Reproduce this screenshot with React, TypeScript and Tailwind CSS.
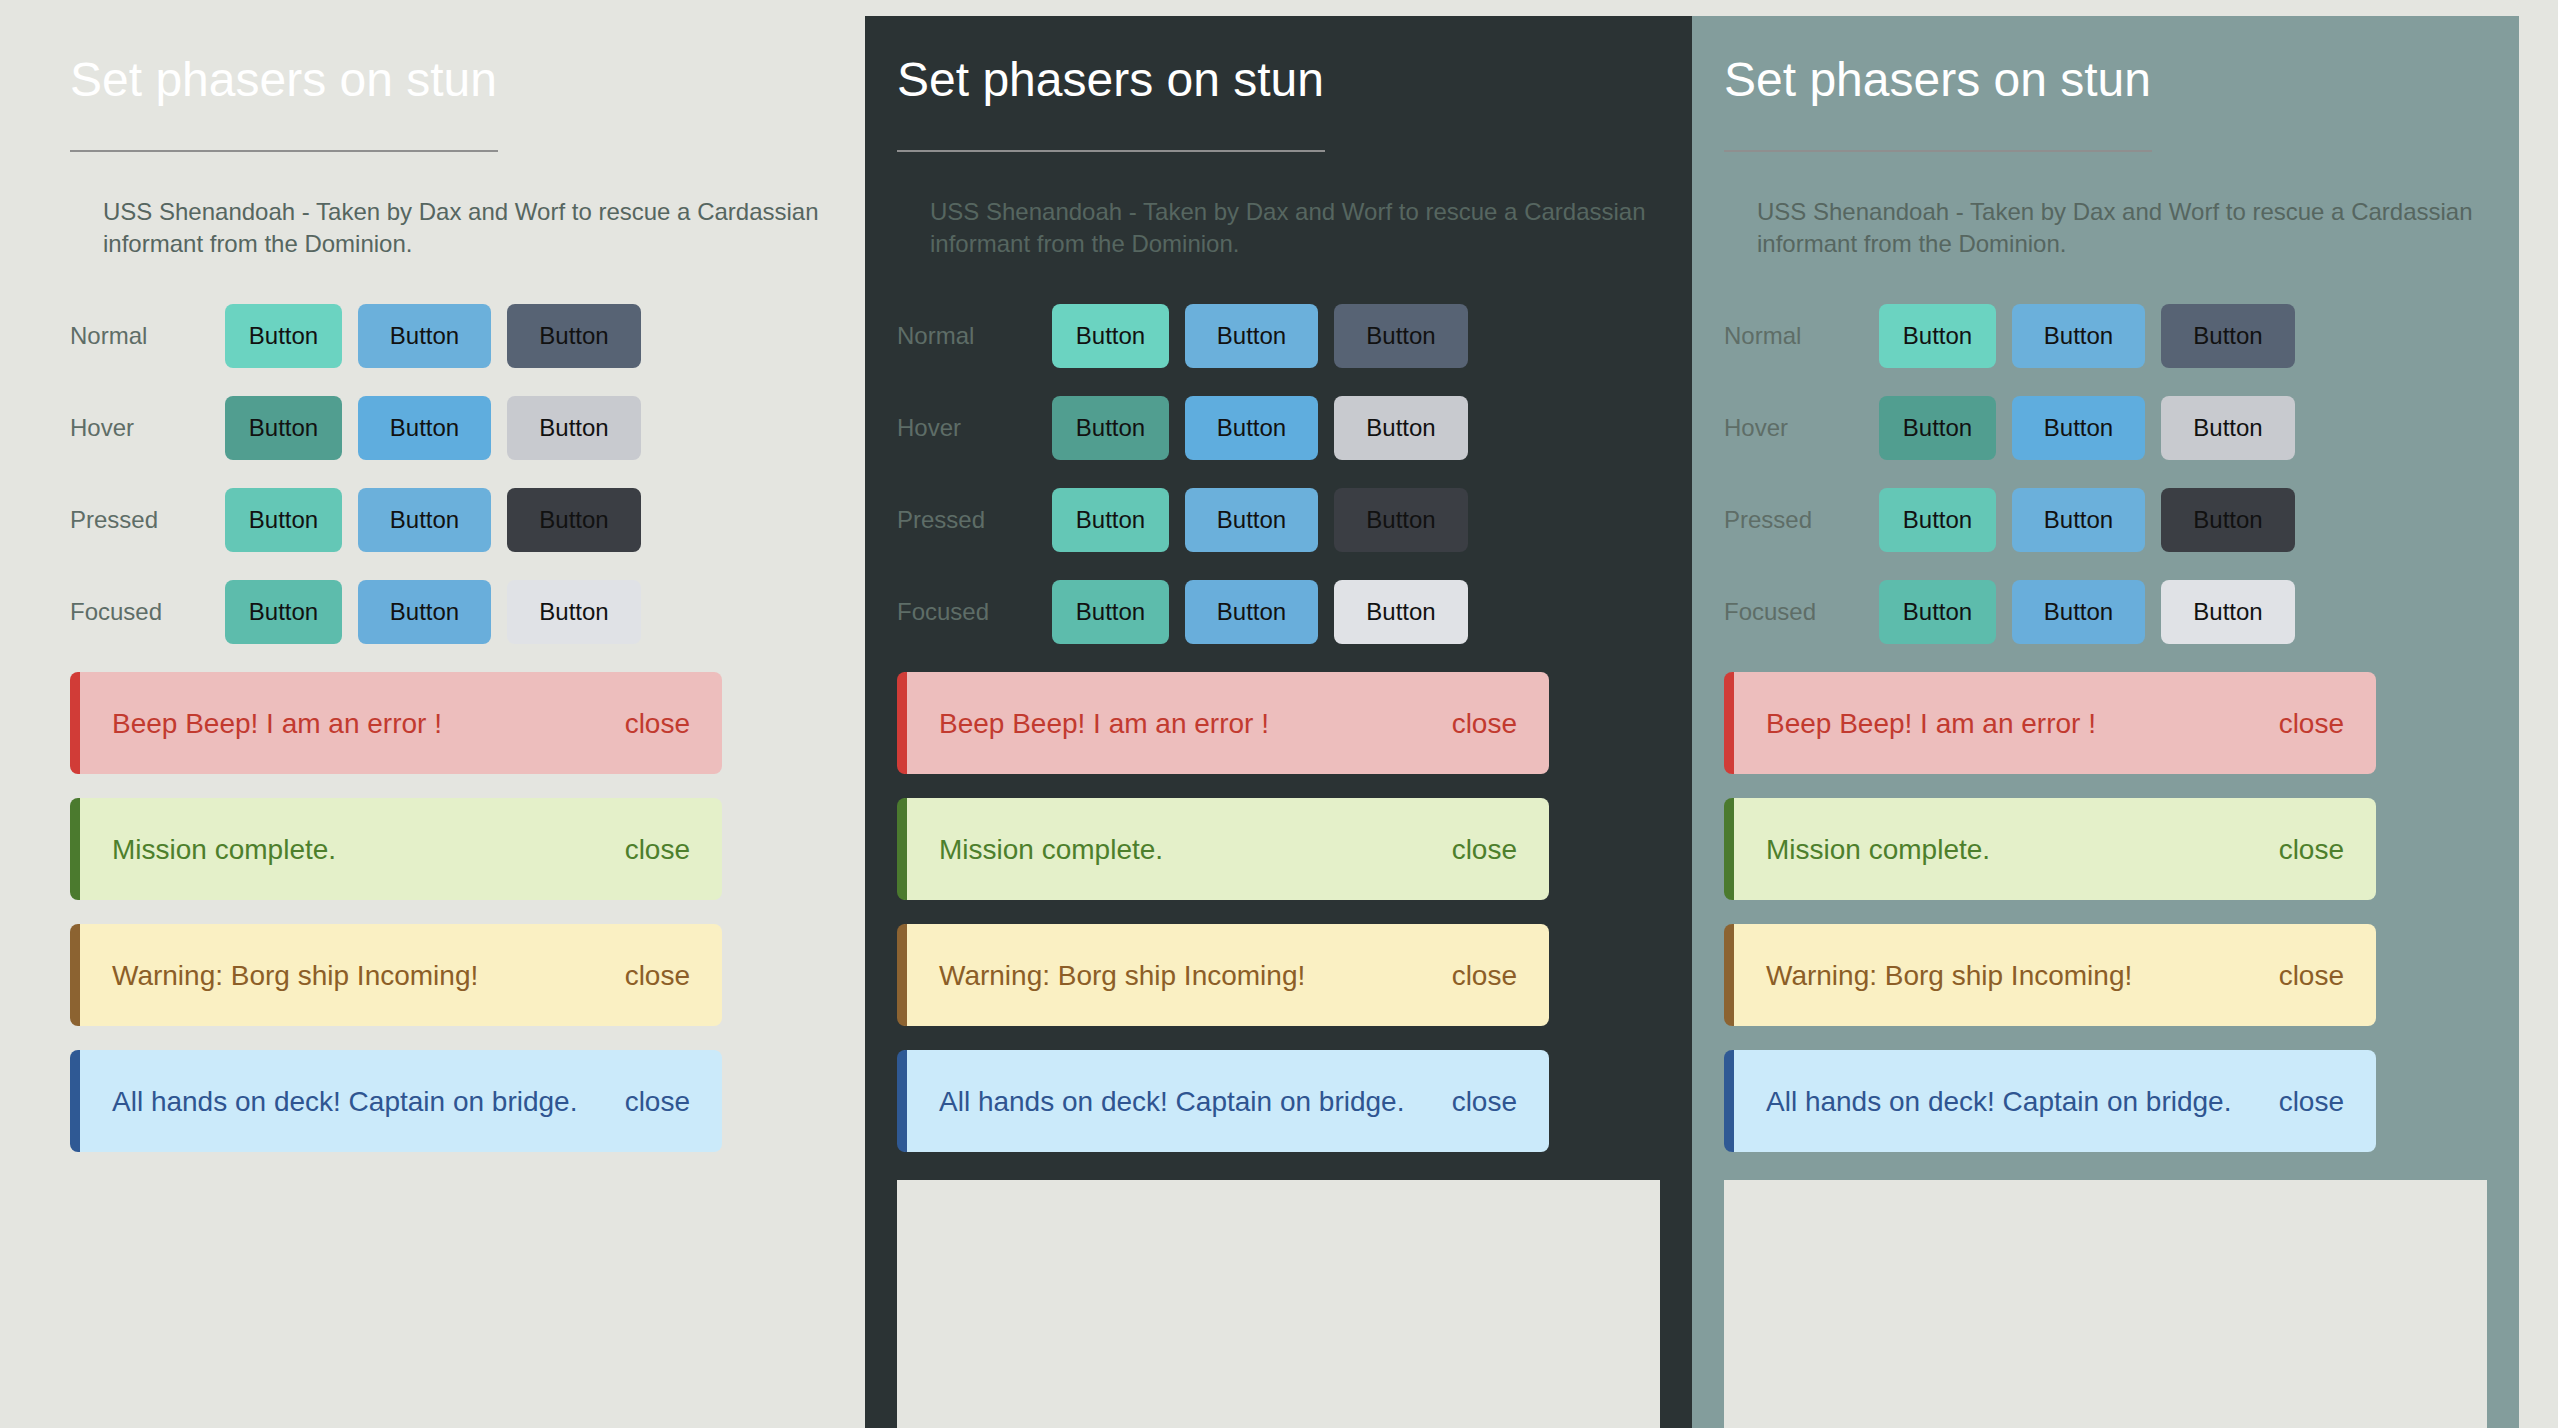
import React from "react";

const font = { fontFamily: '"Liberation Sans", Arial, Helvetica, sans-serif' };

type Row = { label: string; classes: [string, string, string] };

const rows: Row[] = [
  { label: "Normal", classes: ["bg-[#6bd3c1]", "bg-[#6bb0db]", "bg-[#576374]"] },
  { label: "Hover", classes: ["bg-[#519e90]", "bg-[#5fadde]", "bg-[#c8cacf]"] },
  { label: "Pressed", classes: ["bg-[#64c7b6]", "bg-[#6bb0db]", "bg-[#3b3e44]"] },
  { label: "Focused", classes: ["bg-[#5dbcac]", "bg-[#69aedb]", "bg-[#e0e2e6]"] },
];

const alerts = [
  { text: "Beep Beep! I am an error !", cls: "bg-[#edbebd] border-[#d13c37] text-[#c23a2f]" },
  { text: "Mission complete.", cls: "bg-[#e4f0c9] border-[#4b7a2e] text-[#4d7f2c]" },
  { text: "Warning: Borg ship Incoming!", cls: "bg-[#faf0c3] border-[#8c6331] text-[#8c5e27]" },
  { text: "All hands on deck! Captain on bridge.", cls: "bg-[#cbeafa] border-[#2f5994] text-[#2f5591]" },
];

function Panel({ bg }: { bg: string }) {
  return (
    <div className={`w-[827px] shrink-0 px-[32px] pt-[40px] ${bg}`}>
      <h1 className="text-[48px] leading-[48px] font-normal text-white">Set phasers on stun</h1>
      <div className="mt-[46px] h-[2px] w-[428px] bg-[#8f8f8f]" />
      <p className="mt-[44px] ml-[33px] text-[24px] leading-[32px] text-[#566660]">
        USS Shenandoah - Taken by Dax and Worf to rescue a Cardassian informant from the Dominion.
      </p>
      <div className="mt-[44px] flex flex-col gap-[28px]">
        {rows.map((r) => (
          <div key={r.label} className="flex items-center">
            <div className="w-[155px] text-[24px] text-[#5e6d67]">{r.label}</div>
            <div className="flex gap-[16px]">
              <button className={`h-[64px] w-[117px] rounded-[8px] text-[24px] text-[#111] ${r.classes[0]}`}>Button</button>
              <button className={`h-[64px] w-[133px] rounded-[8px] text-[24px] text-[#111] ${r.classes[1]}`}>Button</button>
              <button className={`h-[64px] w-[134px] rounded-[8px] text-[24px] text-[#111] ${r.classes[2]}`}>Button</button>
            </div>
          </div>
        ))}
      </div>
      <div className="mt-[28px] flex flex-col gap-[24px]">
        {alerts.map((a) => (
          <div
            key={a.text}
            className={`flex h-[102px] w-[652px] items-center justify-between rounded-[8px] border-l-[10px] pl-[32px] pr-[32px] pt-[2px] text-[28px] ${a.cls}`}
          >
            <span>{a.text}</span>
            <span>close</span>
          </div>
        ))}
      </div>
      <div className="mt-[28px] h-[400px] w-full bg-[#e4e5e0]" />
    </div>
  );
}

export default function App() {
  return (
    <div className="h-[1428px] w-[2558px] overflow-hidden bg-[#e4e5e0]" style={font}>
      <div className="flex pl-[38px] pt-[16px]">
        <Panel bg="bg-[#e4e5e0]" />
        <Panel bg="bg-[#2b3334]" />
        <Panel bg="bg-[#839d9c]" />
      </div>
    </div>
  );
}
